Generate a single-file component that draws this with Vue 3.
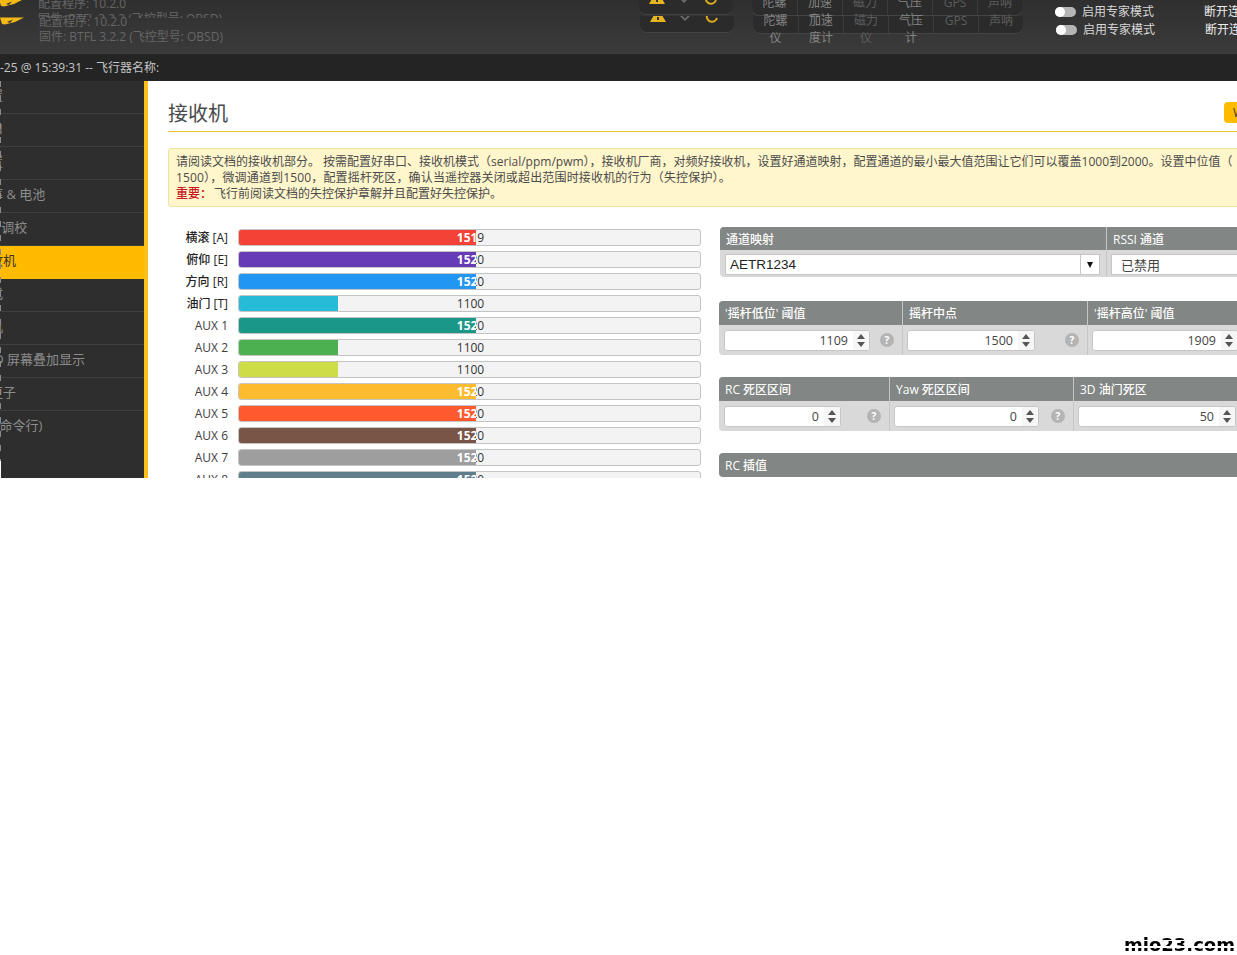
<script setup>
const layers = ['back', 'front']

const sensors = [
  { top: '陀螺', bottom: '仪', on: true },
  { top: '加速', bottom: '度计', on: true },
  { top: '磁力', bottom: '仪', on: false },
  { top: '气压', bottom: '计', on: true },
  { top: 'GPS', bottom: '', on: false },
  { top: '声呐', bottom: '', on: false }
]

const menu = ['设置', '端口', '配置', '功率 & 电池', 'PID 调校', '接收机', '模式', '电机', 'OSD 屏幕叠加显示', '黑匣子', 'CLI(命令行)']

const channels = [
  { name: '横滚 [A]', value: 1519, color: '#f44336', bold: true },
  { name: '俯仰 [E]', value: 1520, color: '#673ab7', bold: true },
  { name: '方向 [R]', value: 1520, color: '#2196f3', bold: true },
  { name: '油门 [T]', value: 1100, color: '#26bcd7', bold: true },
  { name: 'AUX 1', value: 1520, color: '#1a9787' },
  { name: 'AUX 2', value: 1100, color: '#4caf50' },
  { name: 'AUX 3', value: 1100, color: '#cddc47' },
  { name: 'AUX 4', value: 1520, color: '#fdbb30' },
  { name: 'AUX 5', value: 1520, color: '#ff5a2e' },
  { name: 'AUX 6', value: 1520, color: '#795548' },
  { name: 'AUX 7', value: 1520, color: '#9e9e9e' },
  { name: 'AUX 8', value: 1520, color: '#607d8b' }
]

// 800-2200 is the range of the bar
const fillWidth = (v) => ((v - 800) / 14) + '%'

const stickRow = [
  { title: "'摇杆低位' 阈值", value: 1109, inputWidth: 146, help: true },
  { title: '摇杆中点', value: 1500, inputWidth: 128, help: true },
  { title: "'摇杆高位' 阈值", value: 1909, inputWidth: 146, help: false }
]

const deadbandRow = [
  { title: 'RC 死区区间', value: 0, inputWidth: 117, help: true },
  { title: 'Yaw 死区区间', value: 0, inputWidth: 145, help: true },
  { title: '3D 油门死区', value: 50, inputWidth: 158, help: false }
]
</script>

<template>
  <div class="page">
    <div class="shell">
      <header class="top">
        <div v-for="layer in layers" :key="layer" class="layer" :class="layer">
          <div class="row">
            <svg class="logo" width="24" height="8" viewBox="0 0 24 8">
              <polygon points="0,0.5 24,0.5 15,5 5,7.5 2,7" fill="#f4b915" />
              <polygon points="7,5 13,2.5 10,6" fill="#3a3a3a" />
            </svg>
            <div class="versions">
              <div>配置程序: 10.2.0</div>
              <div>固件: BTFL 3.2.2 (飞控型号: OBSD)</div>
            </div>
            <div class="status-box">
              <svg width="16" height="16" viewBox="0 0 16 16"><path d="M8 1 16 15H0Z" fill="#e6b422" /><rect x="7" y="10" width="2" height="3" fill="#333" /></svg>
              <svg width="16" height="16" viewBox="0 0 16 16"><path d="M3 9 8 14 13 9 10.5 9 8 11.5 5.5 9Z" fill="#6a6a6a" /></svg>
              <svg width="16" height="16" viewBox="0 0 16 16"><path d="M3 8a5 5 0 0 0 10 3" fill="none" stroke="#d9a920" stroke-width="2" /></svg>
            </div>
            <div class="sensors">
              <div v-for="s in sensors" :key="s.top" class="sensor" :class="{ on: s.on }">
                <div class="sensor-text">
                  <div>{{ s.top }}</div>
                  <div>{{ s.bottom }}</div>
                </div>
              </div>
            </div>
            <div class="expert">
              <span class="switch"><i></i></span>
              <span>启用专家模式</span>
            </div>
            <div class="connect">断开连接</div>
          </div>
        </div>
      </header>

      <div class="statusbar">
        <span>-25 @ 15:39:31 -- 飞行器名称:</span>
      </div>

      <div class="body">
        <nav class="sidebar">
          <div v-for="(item, i) in menu" :key="item" class="menu-item" :class="{ active: i === 5 }">
            {{ item }}
          </div>
          <div class="edge"></div>
        </nav>

        <main class="content">
          <div class="inner">
            <div class="title-row">
              <h1>接收机</h1>
              <a class="wiki">WIKI</a>
            </div>

            <div class="note">
              请阅读文档的接收机部分。 按需配置好串口、接收机模式（serial/ppm/pwm），接收机厂商，对频好接收机，设置好通道映射，配置通道的最小最大值范围让它们可以覆盖1000到2000。设置中位值（<br />
              <span class="wide">1500），微调通道到1500，配置摇杆死区，确认当遥控器关闭或超出范围时接收机的行为（失控保护）。</span><br />
              <strong>重要：</strong>飞行前阅读文档的失控保护章解并且配置好失控保护。
            </div>

            <div class="columns">
              <div class="bars">
                <div v-for="ch in channels" :key="ch.name" class="bar-row">
                  <label :class="{ bold: ch.bold }">{{ ch.name }}</label>
                  <div class="track">
                    <span class="val">{{ ch.value }}</span>
                    <div class="fill" :style="{ width: fillWidth(ch.value), background: ch.color }">
                      <span class="val light">{{ ch.value }}</span>
                    </div>
                  </div>
                </div>
              </div>

              <div class="panels">
                <div class="panel map">
                  <div class="cell">
                    <div class="head">通道映射</div>
                    <div class="cell-body">
                      <div class="select">
                        <span>AETR1234</span>
                        <b class="arrow"></b>
                      </div>
                    </div>
                  </div>
                  <div class="cell">
                    <div class="head">RSSI 通道</div>
                    <div class="cell-body">
                      <div class="select plain"><span>已禁用</span></div>
                    </div>
                  </div>
                </div>

                <div class="panel sticks">
                  <div v-for="c in stickRow" :key="c.title" class="cell">
                    <div class="head">{{ c.title }}</div>
                    <div class="cell-body">
                      <div class="num" :style="{ width: c.inputWidth + 'px' }">
                        <span>{{ c.value }}</span>
                        <i class="spin"><u></u><s></s></i>
                      </div>
                      <em v-if="c.help" class="help">?</em>
                    </div>
                  </div>
                </div>

                <div class="panel deadband">
                  <div v-for="c in deadbandRow" :key="c.title" class="cell">
                    <div class="head">{{ c.title }}</div>
                    <div class="cell-body">
                      <div class="num" :style="{ width: c.inputWidth + 'px' }">
                        <span>{{ c.value }}</span>
                        <i class="spin"><u></u><s></s></i>
                      </div>
                      <em v-if="c.help" class="help">?</em>
                    </div>
                  </div>
                </div>

                <div class="panel rc">
                  <div class="cell">
                    <div class="head">RC 插值</div>
                  </div>
                </div>
              </div>
            </div>
          </div>
        </main>
      </div>
    </div>

    <div class="watermark">mlo23.com</div>
  </div>
</template>

<style>
html, body {
  margin: 0;
  background: #fff;
}
</style>

<style scoped>
.page {
  position: relative;
  width: 1237px;
  height: 955px;
  overflow: hidden;
  background: #fff;
  font-family: "Open Sans", "Noto Sans CJK SC", sans-serif;
  font-size: 12px;
}

.shell {
  height: 478px;
  display: flex;
  flex-direction: column;
  overflow: hidden;
}

/* top bar: two overlapping copies of the header, as captured */
.top {
  display: grid;
  height: 54px;
  flex: none;
  overflow: hidden;
  background: linear-gradient(#2f2f2f, #3b3b3b);
}
.layer {
  grid-area: 1 / 1;
  overflow: hidden;
}
.layer.back {
  height: 18px;
  margin-left: -1px;
}
.layer.back .row {
  margin-top: -18px;
}
.row {
  display: flex;
  align-items: flex-start;
  height: 54px;
  width: 1300px;
}
.logo {
  flex: none;
  margin-top: 17px;
}
.versions {
  flex: none;
  width: 601px;
  margin: 14px 0 0 15px;
  line-height: 15px;
  color: #666;
}
.status-box {
  flex: none;
  width: 94px;
  height: 17px;
  box-sizing: border-box;
  margin-top: 16px;
  padding: 0 14px 0 10px;
  display: flex;
  justify-content: space-between;
  overflow: hidden;
  background: #2b2b2b;
  border-bottom: 1px solid #444;
  border-radius: 0 0 7px 7px;
}
.status-box svg {
  margin-top: -9px;
  flex: none;
}
.sensors {
  flex: none;
  display: flex;
  width: 270px;
  height: 17px;
  margin: 16px 0 0 19px;
  background: #2b2b2b;
  box-shadow: 0 1px 0 #444;
  border-radius: 0 0 7px 7px;
}
.sensor {
  width: 45px;
  height: 17px;
  box-sizing: border-box;
  border-left: 1px solid #3c3c3c;
  color: #5c5c5c;
  text-align: center;
  line-height: 17px;
}
.sensor-text {
  margin-top: -4px;
}
.sensor:first-child {
  border-left: 0;
}
.sensor.on {
  color: #848484;
}
.expert {
  flex: none;
  display: flex;
  align-items: center;
  gap: 6px;
  margin: 21px 0 0 33px;
  width: 149px;
  color: #d6d6d6;
  font-size: 12px;
  line-height: 17px;
}
.switch {
  width: 21px;
  height: 10px;
  border-radius: 5px;
  background: #b5b5b5;
  display: flex;
}
.switch i {
  width: 10px;
  height: 10px;
  border-radius: 50%;
  background: #fff;
}
.connect {
  margin-top: 21px;
  line-height: 17px;
  color: #eee;
  font-size: 12px;
  white-space: nowrap;
}

.statusbar {
  flex: none;
  height: 27px;
  line-height: 27px;
  background: #242424;
  color: #c4c4c4;
}

.body {
  flex: 1;
  display: flex;
  min-height: 0;
}

.sidebar {
  position: relative;
  flex: none;
  width: 144px;
  background: #2e2e2e;
  border-right: 4px solid #fbc01a;
  overflow: hidden;
}
.menu-item {
  height: 32px;
  line-height: 29px;
  margin-left: -23px;
  font-size: 13px;
  color: #8c8c8c;
  border-bottom: 1px solid #3f3f3f;
  white-space: nowrap;
}
.menu-item.active {
  background: #ffbb00;
  color: #3a3320;
  border-bottom-color: #ffbb00;
}
.menu-item:nth-last-child(2) {
  border-bottom: 0;
}
/* leftover sliver of the window behind, at the far left */
.edge {
  position: absolute;
  left: 0;
  top: 0;
  bottom: 0;
  width: 1px;
  background:
    linear-gradient(transparent 380px, #fff 380px),
    repeating-linear-gradient(#8a8a8a 0 6px, transparent 6px 14px);
}

.content {
  flex: 1;
  min-width: 0;
  overflow: hidden;
  background: #fff;
  padding-left: 20px;
}
.inner {
  width: 1090px;
}
.title-row {
  display: flex;
  justify-content: space-between;
  align-items: flex-end;
  height: 50px;
  border-bottom: 1px solid #e8c52a;
}
.title-row h1 {
  margin: 0 0 4px;
  font-size: 20px;
  line-height: 27px;
  font-weight: 400;
  color: #4a4a4a;
}
.wiki {
  width: 34px;
  height: 21px;
  box-sizing: border-box;
  margin-bottom: 8px;
  padding-left: 9px;
  line-height: 21px;
  border-radius: 4px;
  background: #ffbb00;
  color: #3a3a3a;
}

.note {
  margin-top: 16px;
  height: 59px;
  box-sizing: border-box;
  padding: 5px 7px;
  background: #fff6cc;
  border: 1px solid #efe3a2;
  border-radius: 3px;
  color: #4b4b4b;
  line-height: 16px;
  white-space: nowrap;
}
.note .wide {
  letter-spacing: 0.16px;
}
.note strong {
  color: #c9171e;
  font-weight: 500;
  margin-right: 2px;
}

.columns {
  display: flex;
  margin-top: 20px;
}

.bars {
  flex: none;
  width: 533px;
  margin: 2px 18px 0 0;
  display: flex;
  flex-direction: column;
  gap: 5px;
}
.bar-row {
  display: flex;
  align-items: center;
  height: 17px;
}
.bar-row label {
  flex: none;
  width: 60px;
  margin: -1px 10px 0 0;
  text-align: right;
  color: #3e3e3e;
}
.bar-row label.bold {
  color: #222;
  font-weight: 500;
}
.track {
  position: relative;
  flex: none;
  width: 463px;
  height: 17px;
  box-sizing: border-box;
  background: #f3f3f3;
  border: 1px solid #c4c4c4;
  border-radius: 3px;
  overflow: hidden;
}
.val {
  position: absolute;
  left: 0;
  top: 0;
  width: 463px;
  text-align: center;
  line-height: 15px;
  color: #333;
}
.val.light {
  color: #fff;
  font-weight: 700;
}
.fill {
  position: absolute;
  left: 0;
  top: 0;
  bottom: 0;
  overflow: hidden;
}

.panels {
  flex: none;
  width: 560px;
}
.panel {
  display: flex;
  background: #d9d9d9;
  border-radius: 4px;
  overflow: hidden;
}
.cell {
  border-left: 1px solid #c6c6c6;
  box-sizing: border-box;
}
.cell:first-child {
  border-left: 0;
}
.head {
  height: 24px;
  line-height: 26px;
  padding-left: 6px;
  background: #828684;
  color: #fff;
  font-weight: 500;
  white-space: nowrap;
}
.cell-body {
  display: flex;
  align-items: center;
  height: 30px;
  padding: 0 0 0 4px;
}
.cell:first-child .cell-body {
  padding-left: 5px;
}

.map {
  margin-left: 1px;
}
.map .head {
  height: 23px;
}
.map .cell-body {
  height: 27px;
  padding-top: 2px;
  box-sizing: border-box;
}
.map .cell:first-child {
  width: 386px;
}
.map .cell:last-child {
  width: 140px;
}
.select {
  display: flex;
  justify-content: space-between;
  align-items: center;
  flex: 1;
  height: 21px;
  box-sizing: border-box;
  margin-right: 6px;
  padding-left: 4px;
  background: #fff;
  border: 1px solid #c6c6c6;
  font-family: "Liberation Sans", sans-serif;
  font-size: 13.5px;
  color: #222;
}
.select.plain {
  margin-right: -10px;
  padding-left: 9px;
  font-family: "Open Sans", "Noto Sans CJK SC", sans-serif;
  font-size: 13px;
  color: #444;
}
.arrow {
  position: relative;
  flex: none;
  width: 18px;
  height: 19px;
  border-left: 1px solid #c6c6c6;
}
.arrow::after {
  content: "";
  position: absolute;
  left: 6px;
  top: 7px;
  border-left: 3px solid transparent;
  border-right: 3px solid transparent;
  border-top: 6px solid #111;
}

.sticks {
  margin-top: 24px;
}
.sticks .cell:nth-child(1) {
  width: 183px;
}
.sticks .cell:nth-child(2) {
  width: 185px;
}
.sticks .cell:nth-child(3) {
  width: 192px;
}
.deadband {
  margin-top: 22px;
}
.deadband .cell:nth-child(1) {
  width: 170px;
}
.deadband .cell:nth-child(2) {
  width: 184px;
}
.deadband .cell:nth-child(3) {
  width: 206px;
}
.rc {
  margin-top: 22px;
}
.rc .cell {
  width: 100%;
}

.num {
  display: flex;
  justify-content: flex-end;
  align-items: center;
  flex: none;
  height: 21px;
  box-sizing: border-box;
  background: #fff;
  border: 1px solid #c6c6c6;
  border-radius: 3px;
  color: #444;
  font-size: 12.5px;
  font-family: "Open Sans", sans-serif;
  overflow: hidden;
}
.spin {
  flex: none;
  align-self: stretch;
  width: 16px;
  margin-left: 5px;
  background: #f6f6f6;
  display: flex;
  flex-direction: column;
  align-items: center;
  justify-content: center;
  gap: 3px;
}
.spin u, .spin s {
  display: block;
  border-left: 4px solid transparent;
  border-right: 4px solid transparent;
}
.spin u {
  border-bottom: 5px solid #555;
}
.spin s {
  border-top: 5px solid #555;
}
.help {
  flex: none;
  width: 14px;
  height: 14px;
  margin-left: auto;
  margin-right: 8px;
  border-radius: 50%;
  background: #b4b4b4;
  color: #fff;
  font-style: normal;
  font-weight: 700;
  font-size: 10px;
  line-height: 14px;
  text-align: center;
}

.watermark {
  position: absolute;
  right: 2px;
  bottom: 1px;
  font-family: "DejaVu Sans", sans-serif;
  font-weight: 700;
  font-size: 18px;
  line-height: 19px;
  letter-spacing: 0;
  color: transparent;
  background: repeating-linear-gradient(#000 0 5px, #fff 5px 6px, #000 6px 11px, #fff 11px 13px);
  -webkit-background-clip: text;
  background-clip: text;
}
</style>
